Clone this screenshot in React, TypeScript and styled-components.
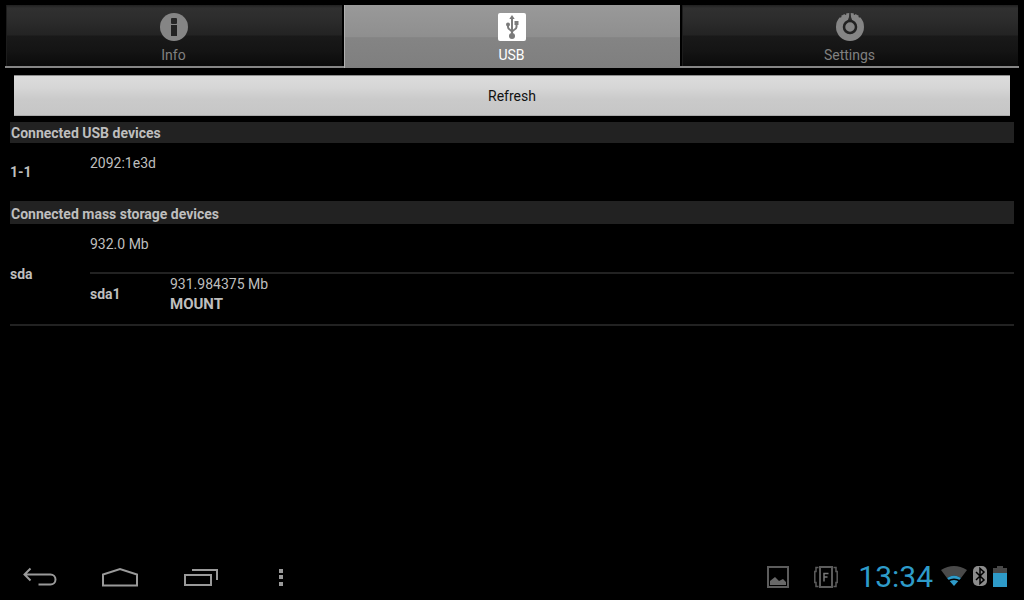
import React from "react";
import styled, { createGlobalStyle } from "styled-components";

const GlobalStyle = createGlobalStyle`
  *, *::before, *::after { box-sizing: border-box; }
  body {
    margin: 0;
    background: #000;
    color: #bebebe;
    font: 14px/20px Roboto, "Liberation Sans", sans-serif;
  }
  button { font: inherit; color: inherit; border: 0; padding: 0; background: none; cursor: pointer; }
`;

const Screen = styled.div`
  display: flex;
  flex-direction: column;
  min-height: 100vh;
`;

const TabBar = styled.div`
  display: grid;
  grid-template-columns: repeat(3, 1fr);
  gap: 2px;
  margin: 5px 5px 0;
  height: 63px;
  padding: 0 1px;
  background: linear-gradient(#868686, #868686) bottom / 100% 2px no-repeat;
`;

const Tab = styled.button<{ $active?: boolean }>`
  display: flex;
  flex-direction: column;
  align-items: center;
  gap: 4px;
  padding: 8px 1px 0 0;
  height: ${(p) => (p.$active ? 63 : 61)}px;
  color: ${(p) => (p.$active ? "#fff" : "#808080")};
  box-shadow: inset 1px 0 ${(p) => (p.$active ? "#b0b0b0" : "#1c1c1c")};
  background: ${(p) =>
    p.$active
      ? "linear-gradient(#999 0%, #8f8f8f 50%, #848484 52%, #7f7f7f 100%)"
      : "linear-gradient(#202020 0, #303030 3px, #2d2d2d 13px, #232323 30px, #191919 31px, #141414 46px, #0b0b0b 100%)"};
`;

const TabIcon = styled.svg`
  display: block;
  width: 28px;
  height: 28px;
`;

const Content = styled.main`
  flex: 1;
  display: flex;
  flex-direction: column;
  padding: 7px 10px 0;
`;

const RefreshButton = styled.button`
  height: 41px;
  margin: 0 4px 6px;
  color: #111;
  border-top: 1px solid #8c8c8c;
  border-bottom: 1px solid #aaa;
  background: linear-gradient(#dcdcdc, #d6d6d6 30%, #cacaca 60%, #c6c6c6);
`;

const SectionTitle = styled.h2<{ $spaced?: boolean }>`
  margin: 0;
  padding: ${(p) => (p.$spaced ? 3 : 1)}px 1px 0;
  font-size: 14px;
  line-height: 20px;
  font-weight: 700;
  background: #222;
`;

const DeviceRow = styled.div<{ $ruled?: boolean }>`
  display: grid;
  grid-template-columns: 80px 1fr;
  align-items: center;
  border-bottom: ${(p) => (p.$ruled ? "2px solid #222" : "0")};
`;

const DeviceName = styled.div`
  font-weight: 700;
`;

const DeviceInfo = styled.div`
  padding: 10px 0;
`;

const Summary = styled.div`
  padding-bottom: 18px;
`;

const Partition = styled(DeviceRow)`
  border-top: 2px solid #222;
`;

const MountButton = styled.button`
  display: block;
  font-size: 15px;
  font-weight: 700;
`;

const SystemBar = styled.footer`
  display: flex;
  justify-content: space-between;
  align-items: center;
  height: 48px;
  padding-top: 2px;
  color: #9a9a9a;
`;

const NavKeys = styled.nav`
  display: flex;
`;

const NavKey = styled.button`
  display: flex;
  align-items: center;
  justify-content: center;
  width: 80px;
  height: 46px;
`;

const Status = styled.div`
  display: flex;
  align-items: center;
  padding-right: 17px;
`;

const Notifications = styled.div`
  display: flex;
  gap: 24px;
  padding-right: 20px;
`;

const Clock = styled.time`
  font-size: 30px;
  line-height: 46px;
  color: #2e9bc9;
`;

const Signals = styled.div`
  display: flex;
  align-items: center;
  gap: 6px;
  padding: 0 0 2px 8px;
`;

const Glyph = styled.svg`
  display: block;
`;

const InfoIcon = () => (
  <TabIcon viewBox="0 0 28 28" aria-hidden="true">
    <circle cx="14" cy="14" r="14" fill="#858585" />
    <rect x="11" y="5" width="6" height="6" rx="1" fill="#262626" />
    <path d="M11 12h6v11h-6z" fill="#222" />
  </TabIcon>
);

const UsbIcon = () => (
  <TabIcon viewBox="0 0 28 28" aria-hidden="true">
    <rect width="28" height="28" rx="2" fill="#fff" />
    <g fill="none" stroke="#7a7a7a" strokeWidth="2">
      <path d="M14 4v19" />
      <path d="M10 12v2c0 3 4 2.500 4 5.500" />
      <path d="M18.500 11v3c0 3-4.500 2.500-4.500 5.500" />
    </g>
    <g fill="#7a7a7a">
      <path d="M14 2l2.700 4h-5.400z" />
      <circle cx="10" cy="11.500" r="2" />
      <path d="M16.500 8h4v4h-4z" />
      <circle cx="14" cy="23" r="3" />
    </g>
  </TabIcon>
);

const SettingsIcon = () => (
  <TabIcon viewBox="0 0 28 28" aria-hidden="true">
    <circle cx="14" cy="14" r="14" fill="#858585" />
    <path d="M9 0l.7 1.700M19 0l-.7 1.700M4 3l1.200 1.200M24 3l-1.200 1.200" stroke="#2c2c2c" strokeWidth="1.500" />
    <path d="M13.300 0h1.400l.3 4 1.500 4h-5l1.500-4z" fill="#2c2c2c" />
    <circle cx="14" cy="14" r="6" fill="#858585" stroke="#222" strokeWidth="2.500" />
  </TabIcon>
);

const BackIcon = () => (
  <Glyph width="34" height="20" viewBox="0 0 34 20" fill="none" stroke="currentColor" strokeWidth="2" aria-hidden="true">
    <path d="M7.500 1.500L1.500 7.500l6 6M2 7.500h25.500a5 5 0 0 1 0 10H15.500" />
  </Glyph>
);

const HomeIcon = () => (
  <Glyph width="36" height="20" viewBox="0 0 36 20" fill="none" stroke="currentColor" strokeWidth="2" aria-hidden="true">
    <path d="M1 18.500V7.500L18 2l17 5.500v11z" />
  </Glyph>
);

const RecentsIcon = () => (
  <Glyph width="36" height="18" viewBox="-2 0 36 18" fill="none" stroke="currentColor" strokeWidth="2" aria-hidden="true">
    <path d="M1 7h26v10H1zM8 2h25v10" />
  </Glyph>
);

const MenuIcon = () => (
  <Glyph width="6" height="18" viewBox="-2 0 6 18" fill="currentColor" aria-hidden="true">
    <path d="M0 1h4v4H0zM0 7h4v4H0zM0 14h4v4H0z" />
  </Glyph>
);

const PictureIcon = () => (
  <Glyph width="23" height="22" viewBox="0 0 23 22" aria-hidden="true">
    <path d="M1 1h20v20H1z" fill="none" stroke="#5c5c5c" strokeWidth="2" />
    <path d="M3 19v-4l5-4 4 4 4-2 3 3v3z" fill="#686868" />
  </Glyph>
);

const CardIcon = () => (
  <Glyph width="24" height="22" viewBox="0 0 24 22" fill="none" stroke="#5c5c5c" aria-hidden="true">
    <path d="M6 1h12v20H6z" strokeWidth="2" />
    <path d="M4.500 1.500H2v4H.8v11H2v4h2.500M19.500 1.500H22v4h1.200v11H22v4h-2.500" strokeWidth="1.500" />
    <path d="M10 15.500v-8h4.500M10 11h3.500" stroke="#777" strokeWidth="1.500" />
  </Glyph>
);

const WifiIcon = () => (
  <Glyph width="26" height="20" viewBox="0 0 26 20" aria-hidden="true">
    <path d="M0 4Q13-4 26 4L20 12Q13 7 6 12z" fill="#4a4a4a" />
    <path d="M6 12Q13 7 20 12L13 20z" fill="#2e9bc9" />
    <path d="M7 15Q13 11.500 19 15" fill="none" stroke="#000" strokeWidth="1.500" />
  </Glyph>
);

const BluetoothIcon = () => (
  <Glyph width="14" height="20" viewBox="0 0 14 20" aria-hidden="true">
    <rect width="14" height="20" rx="5" fill="#8c8c8c" />
    <path d="M3 6l8 8-4 3.500v-15L11 6l-8 8" fill="none" stroke="#000" strokeWidth="1.500" />
  </Glyph>
);

const BatteryIcon = () => (
  <Glyph width="14" height="21" viewBox="0 0 14 21" aria-hidden="true">
    <path d="M0 2h4V0h6v2h4v5H0z" fill="#484848" />
    <path d="M0 7h14v14H0z" fill="#2e9bc9" />
  </Glyph>
);

export default function App() {
  return (
    <Screen>
      <GlobalStyle />
      <TabBar role="tablist">
        <Tab role="tab" aria-selected={false}>
          <InfoIcon />
          Info
        </Tab>
        <Tab role="tab" aria-selected={true} $active>
          <UsbIcon />
          USB
        </Tab>
        <Tab role="tab" aria-selected={false}>
          <SettingsIcon />
          Settings
        </Tab>
      </TabBar>
      <Content>
        <RefreshButton>Refresh</RefreshButton>
        <SectionTitle>Connected USB devices</SectionTitle>
        <DeviceRow>
          <DeviceName>1-1</DeviceName>
          <DeviceInfo>
            <Summary>2092:1e3d</Summary>
          </DeviceInfo>
        </DeviceRow>
        <SectionTitle $spaced>Connected mass storage devices</SectionTitle>
        <DeviceRow $ruled>
          <DeviceName>sda</DeviceName>
          <DeviceInfo>
            <Summary>932.0 Mb</Summary>
            <Partition>
              <DeviceName>sda1</DeviceName>
              <div>
                931.984375 Mb
                <MountButton>MOUNT</MountButton>
              </div>
            </Partition>
          </DeviceInfo>
        </DeviceRow>
      </Content>
      <SystemBar>
        <NavKeys>
          <NavKey aria-label="Back"><BackIcon /></NavKey>
          <NavKey aria-label="Home"><HomeIcon /></NavKey>
          <NavKey aria-label="Recent apps"><RecentsIcon /></NavKey>
          <NavKey aria-label="Menu"><MenuIcon /></NavKey>
        </NavKeys>
        <Status>
          <Notifications>
            <PictureIcon />
            <CardIcon />
          </Notifications>
          <Clock>13:34</Clock>
          <Signals>
            <WifiIcon />
            <BluetoothIcon />
            <BatteryIcon />
          </Signals>
        </Status>
      </SystemBar>
    </Screen>
  );
}
